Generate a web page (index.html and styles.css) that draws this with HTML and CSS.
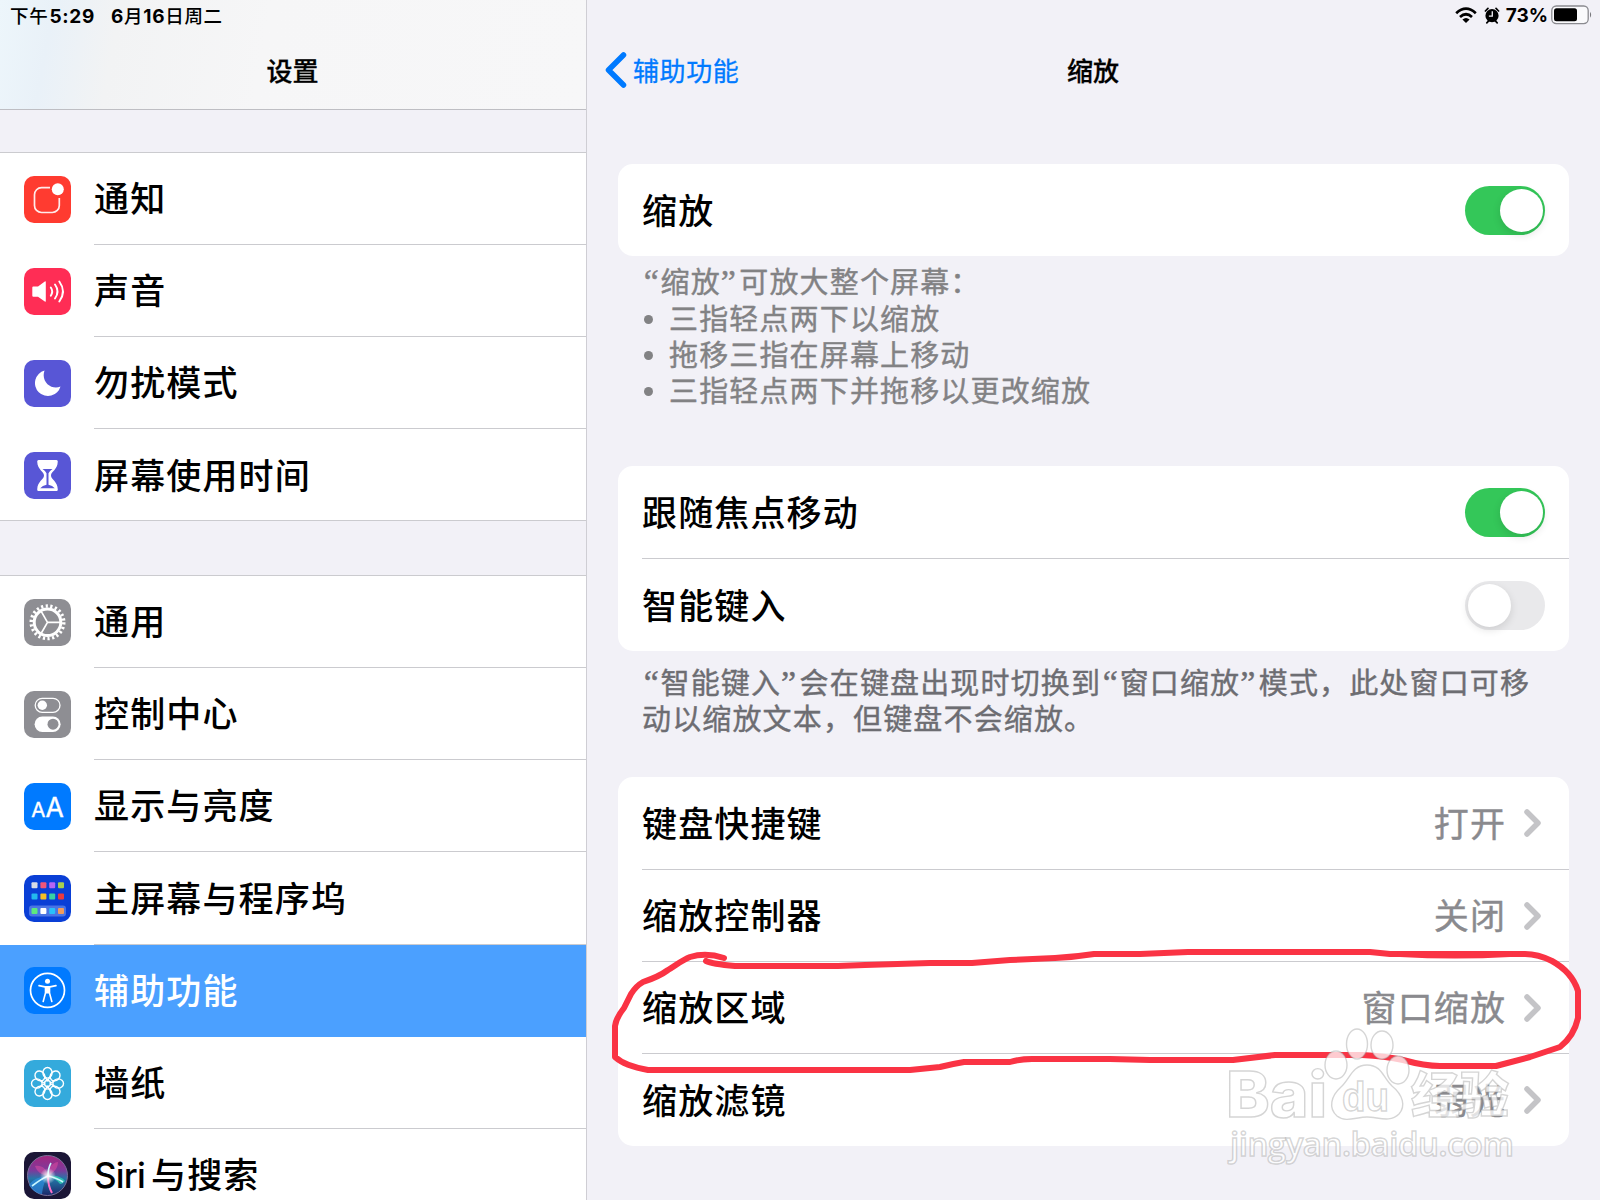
FILE: index.html
```html
<!DOCTYPE html>
<html lang="zh-CN">
<head>
  <meta charset="UTF-8" />
  <meta name="viewport" content="width=device-width, initial-scale=1.0" />
  <title>设置</title>
  <link rel="stylesheet" href="styles.css">
</head>
<body>
  <div class="screen">
    <aside class="sidebar">
      <header class="side-header">
        <div class="status"><span>下午<b class="num time">5:29</b></span><span class="date"><b class="num">6</b>月<b class="num">16</b>日周二</span></div>
        <h1 class="title">设置</h1>
      </header>

      <nav class="group">
        <a class="item">
          <svg class="icon" viewBox="0 0 47 47" style="background:#ff3b30">
            <path d="M26 11.7H17.5a7 7 0 0 0-7 7v10.8a7 7 0 0 0 7 7h10.8a7 7 0 0 0 7-7V22" fill="none" stroke="#fff" stroke-opacity=".9" stroke-width="1.7"/>
            <circle cx="33.8" cy="13.3" r="6" fill="#fff"/>
          </svg>
          <span class="label">通知</span>
        </a>
        <a class="item">
          <svg class="icon" viewBox="0 0 47 47" style="background:#ff2d55">
            <path d="M8.3 19.5q0-1 1-1H14l6.8-5q1-.6 1 .5v19q0 1.2-1 .5L14 28.8H9.3q-1 0-1-1z" fill="#fff"/>
            <path d="M26.8 19.5q2.8 4 0 8.3M31 16.5q5 7 0 14M35.3 13.5q7.4 10 0 20" fill="none" stroke="#fff" stroke-width="1.9" stroke-linecap="round"/>
          </svg>
          <span class="label">声音</span>
        </a>
        <a class="item">
          <svg class="icon" viewBox="0 0 47 47" style="background:#5856d6">
            <path d="M20.5 10.5A13 13 0 1 0 36.5 26.5C28 30.5 16.5 22 20.5 10.5z" fill="#fff"/>
          </svg>
          <span class="label">勿扰模式</span>
        </a>
        <a class="item">
          <svg class="icon" viewBox="0 0 47 47" style="background:#5856d6">
            <path d="M14.5 8h18q1.300 0 1.300 1.500C33.500 18 27 19.500 27 23.500S33.500 29 33.800 37.500q0 1.500-1.300 1.500h-18q-1.300 0-1.300-1.500C13.500 29 20 27.500 20 23.500S13.500 18 13.200 9.500Q13.200 8 14.500 8z" fill="#fff"/>
            <path d="M18.500 17h10q-3 2-4 4.200v11.500q4 .5 6.300 3.500H16.200q2.300-3 6.300-3.500V21.200q-1-2.200-4-4.200z" fill="#5856d6"/>
          </svg>
          <span class="label">屏幕使用时间</span>
        </a>
      </nav>

      <nav class="group">
        <a class="item">
          <svg class="icon" viewBox="0 0 47 47" style="background:#8e8e93">
            <g fill="none" stroke="#fff">
              <circle cx="23.5" cy="23.3" r="13.3" stroke-width="3"/>
              <circle cx="23.5" cy="23.3" r="16.3" stroke-width="3.4" stroke-dasharray="2.2 2.455"/>
              <path d="M23.5 23.3H37M23.5 23.3L16.8 11.6M23.5 23.3L16.8 35" stroke-width="1.7"/>
            </g>
          </svg>
          <span class="label">通用</span>
        </a>
        <a class="item">
          <svg class="icon" viewBox="0 0 47 47" style="background:#8e8e93">
            <rect x="11.2" y="7.3" width="24.8" height="14" rx="7" fill="none" stroke="#fff" stroke-width="1.3"/>
            <circle cx="18.3" cy="14.3" r="4.7" fill="#fff"/>
            <rect x="10.6" y="25.5" width="26" height="15.5" rx="7.7" fill="#fff"/>
            <circle cx="29" cy="33.2" r="5.5" fill="#8e8e93"/>
          </svg>
          <span class="label">控制中心</span>
        </a>
        <a class="item">
          <svg class="icon" viewBox="0 0 47 47" style="background:#007aff">
            <text class="aa" x="7.3" y="33.5" font-size="20.5">A</text>
            <text class="aa" x="21.5" y="33.5" font-size="26.5">A</text>
          </svg>
          <span class="label">显示与亮度</span>
        </a>
        <a class="item">
          <svg class="icon" viewBox="0 0 47 47" style="background:#0a3fd6">
            <rect x="5" y="30.5" width="37" height="11" rx="3" fill="#4a74e4"/>
            <g>
              <rect x="7.5" y="7.3" width="6" height="6" rx="1" fill="#d9dce6"/>
              <rect x="16.4" y="7.3" width="6" height="6" rx="1" fill="#f0567a"/>
              <rect x="25.2" y="7.3" width="6" height="6" rx="1" fill="#b465f5"/>
              <rect x="34" y="7.3" width="6" height="6" rx="1" fill="#a8cf4e"/>
              <rect x="7.5" y="18.5" width="6" height="6" rx="1" fill="#22b8ee"/>
              <rect x="16.4" y="18.5" width="6" height="6" rx="1" fill="#f7bf23"/>
              <rect x="25.2" y="18.5" width="6" height="6" rx="1" fill="#37d3a3"/>
              <rect x="34" y="18.5" width="6" height="6" rx="1" fill="#ec3a3e"/>
              <rect x="7.5" y="33" width="6" height="6" rx="1" fill="#5de87d"/>
              <rect x="16.4" y="33" width="6" height="6" rx="1" fill="#fff"/>
              <rect x="25.2" y="33" width="6" height="6" rx="1" fill="#28c0fb"/>
              <rect x="34" y="33" width="6" height="6" rx="1" fill="#f39c5b"/>
            </g>
          </svg>
          <span class="label">主屏幕与程序坞</span>
        </a>
        <a class="item active">
          <svg class="icon" viewBox="0 0 47 47" style="background:#007aff">
            <circle cx="23.5" cy="23.3" r="17" fill="none" stroke="#fff" stroke-width="1.7"/>
            <circle cx="23.5" cy="14.2" r="2.5" fill="#fff"/>
            <path d="M15 18.6l6 1.300h5l6-1.300M21.500 20v6l-2.300 8.500M25.500 20v6l2.300 8.500" fill="none" stroke="#fff" stroke-width="1.6" stroke-linecap="round" stroke-linejoin="round"/>
            <path d="M21 19.5h5v7h-5z" fill="#fff"/>
          </svg>
          <span class="label">辅助功能</span>
        </a>
        <a class="item">
          <svg class="icon" viewBox="0 0 47 47" style="background:#34aadc">
            <g fill="none" stroke="#fff" stroke-width="1.4">
              <ellipse cx="23.5" cy="12.8" rx="4.6" ry="5.3"/>
              <ellipse cx="23.5" cy="12.8" rx="4.6" ry="5.3" transform="rotate(45 23.5 23.5)"/>
              <ellipse cx="23.5" cy="12.8" rx="4.6" ry="5.3" transform="rotate(90 23.5 23.5)"/>
              <ellipse cx="23.5" cy="12.8" rx="4.6" ry="5.3" transform="rotate(135 23.5 23.5)"/>
              <ellipse cx="23.5" cy="12.8" rx="4.6" ry="5.3" transform="rotate(180 23.5 23.5)"/>
              <ellipse cx="23.5" cy="12.8" rx="4.6" ry="5.3" transform="rotate(225 23.5 23.5)"/>
              <ellipse cx="23.5" cy="12.8" rx="4.6" ry="5.3" transform="rotate(270 23.5 23.5)"/>
              <ellipse cx="23.5" cy="12.8" rx="4.6" ry="5.3" transform="rotate(315 23.5 23.5)"/>
              <circle cx="23.5" cy="23.5" r="3"/>
              <path d="M20.5 16.5L23.5 20.5L26.5 16.5M30.5 20.5L26.5 23.5L30.5 26.5M26.5 30.5L23.5 26.5L20.5 30.5M16.5 26.5L20.5 23.5L16.5 20.5"/>
            </g>
          </svg>
          <span class="label">墙纸</span>
        </a>
        <a class="item">
          <svg class="icon" viewBox="0 0 47 47" style="background:#1b1636">
            <defs>
              <linearGradient id="orb" x1="0" y1="0" x2="0" y2="1">
                <stop offset="0" stop-color="#a5257f"/>
                <stop offset=".38" stop-color="#7b3b9c"/>
                <stop offset=".58" stop-color="#2477a8"/>
                <stop offset="1" stop-color="#1b2768"/>
              </linearGradient>
              <radialGradient id="glow">
                <stop offset="0" stop-color="#fff"/>
                <stop offset=".4" stop-color="#fff" stop-opacity=".6"/>
                <stop offset="1" stop-color="#fff" stop-opacity="0"/>
              </radialGradient>
            </defs>
            <circle cx="23.5" cy="23.5" r="20" fill="url(#orb)" stroke="#7a7199" stroke-width="1"/>
            <path d="M23 24C14 25 8 28 5 33C8 39 14 42 18 42C19 34 21 29 23 24z" fill="#2e8fe0" opacity=".7"/>
            <path d="M24 24C32 23 38 25 41 29C39 31 38 32 36 32C33 28 29 26 24 24z" fill="#32d0b4" opacity=".8"/>
            <path d="M24 24C23 17 18 13 11 14C13 20 18 23 24 24zM24 24C24 17 27 11 34 10C34 17 29 21 24 24z" fill="#ef4fa4" opacity=".45"/>
            <path d="M24 24Q24 34 28 41" fill="none" stroke="#ff70c8" stroke-width="2"/>
            <path d="M8 34Q17 27 24 24Q33 26 39 30M24 24Q24 16 27 11" fill="none" stroke="#c9f6ff" stroke-width="1.6"/>
            <circle cx="24" cy="24" r="8" fill="url(#glow)"/>
          </svg>
          <span class="label"><span class="latin">Siri</span>与搜索</span>
        </a>
      </nav>
    </aside>

    <main class="detail">
      <div class="status status-right">
        <svg class="wifi" width="22" height="17" viewBox="0 0 22 17">
          <g fill="none" stroke="#000" stroke-width="2.7">
            <path d="M1.2 6.2Q11-3 20.8 6.2"/>
            <path d="M5 10Q11 4.5 17 10"/>
          </g>
          <path d="M7.4 12.5Q11 9.5 14.6 12.5L11 16z"/>
        </svg>
        <svg class="alarm" width="16" height="17" viewBox="0 0 17 18">
          <circle cx="8.5" cy="9.2" r="7"/>
          <path d="M1.5 4.2L4.2 1.5M15.5 4.2L12.8 1.5M3 16.8l2-2M14 16.8l-2-2" stroke="#000" stroke-width="1.8" stroke-linecap="round"/>
          <path d="M8.8 4.5v5.2H5.2" fill="none" stroke="#f2f1f7" stroke-width="1.4"/>
        </svg>
        <b class="num">73%</b>
        <svg class="battery" width="42" height="20" viewBox="0 0 42 20">
          <rect x=".8" y="1" width="36.4" height="17.6" rx="4.5" fill="#fafafc" stroke="#8b8b90" stroke-width="1.3"/>
          <rect x="3" y="3.3" width="23" height="13" rx="2.5"/>
          <path d="M39 6.8q2.3 3 0 6z" fill="#77777b"/>
        </svg>
      </div>
      <header class="detail-header">
        <a class="back">
          <svg width="22" height="36" viewBox="0 0 22 36"><path d="M18.5 3L3.5 18L18.5 33" fill="none" stroke="#007aff" stroke-width="5.5" stroke-linecap="round" stroke-linejoin="round"/></svg>
          <span>辅助功能</span>
        </a>
        <h2 class="title">缩放</h2>
      </header>

      <section class="card">
        <div class="row"><span class="label">缩放</span><span class="switch on"></span></div>
      </section>
      <div class="note note-list">
        <p><span class="q">“</span>缩放<span class="q end">”</span>可放大整个屏幕：</p>
        <ul>
          <li>三指轻点两下以缩放</li>
          <li>拖移三指在屏幕上移动</li>
          <li>三指轻点两下并拖移以更改缩放</li>
        </ul>
      </div>

      <section class="card">
        <div class="row"><span class="label">跟随焦点移动</span><span class="switch on"></span></div>
        <div class="row"><span class="label">智能键入</span><span class="switch"></span></div>
      </section>
      <p class="note note-typing"><span class="q">“</span>智能键入<span class="q end">”</span>会在键盘出现时切换到<span class="q">“</span>窗口缩放<span class="q end">”</span>模式，此处窗口可移<br>动以缩放文本，但键盘不会缩放。</p>

      <section class="card">
        <div class="row">
          <span class="label">键盘快捷键</span><span class="value">打开</span>
          <svg class="chevron" viewBox="0 0 18 28"><path d="M3 3L14 14L3 25"/></svg>
        </div>
        <div class="row">
          <span class="label">缩放控制器</span><span class="value">关闭</span>
          <svg class="chevron" viewBox="0 0 18 28"><path d="M3 3L14 14L3 25"/></svg>
        </div>
        <div class="row">
          <span class="label">缩放区域</span><span class="value">窗口缩放</span>
          <svg class="chevron" viewBox="0 0 18 28"><path d="M3 3L14 14L3 25"/></svg>
        </div>
        <div class="row">
          <span class="label">缩放滤镜</span><span class="value">弱光</span>
          <svg class="chevron" viewBox="0 0 18 28"><path d="M3 3L14 14L3 25"/></svg>
        </div>
      </section>
    </main>

    <!-- hand-drawn marker and watermark -->
    <svg class="overlay" viewBox="0 0 1600 1200">
      <path class="marker" d="M724 958Q706 952 690 957C682 960 675 966 668 970C660 976 652 979 643 982Q636 986 631 994L624 1008Q616 1018 615 1026V1057Q625 1066 648 1070H910L940 1067Q952 1064 964 1062H1010Q1020 1059 1032 1059H1110L1150 1060H1233L1275 1055H1362Q1385 1056 1403 1060Q1425 1066 1440 1066H1496L1530 1057L1560 1047Q1574 1036 1578 1018V991Q1572 972 1552 961Q1538 954 1525 954H1390L1370 952H1188L1140 954H1094Q1075 957 1055 958L1010 960L972 963H930L865 965L838 966H735Q712 964 706 961"/>
      <path class="marker" d="M1400 954Q1455 957 1510 954"/>
      <g class="watermark">
        <text class="bai" x="1226" y="1117" font-size="63" textLength="101" lengthAdjust="spacingAndGlyphs">Bai</text>
        <ellipse cx="1336" cy="1065" rx="11" ry="14"/>
        <ellipse cx="1357" cy="1044" rx="10.5" ry="15"/>
        <ellipse cx="1382" cy="1045" rx="11" ry="14"/>
        <ellipse cx="1398" cy="1070" rx="11" ry="14"/>
        <path d="M1367 1065C1382 1065 1383 1078 1392 1086C1403 1095 1406 1106 1399 1114C1390 1123 1378 1117 1367 1117S1346 1123 1337 1116C1328 1108 1331 1096 1341 1087C1350 1079 1352 1065 1367 1065z"/>
        <text x="1342" y="1111" font-size="40" font-weight="bold" textLength="47" lengthAdjust="spacingAndGlyphs">du</text>
        <text class="cjk" x="1411" y="1113" font-size="49" textLength="98">经验</text>
        <text class="url" x="1230" y="1156" font-size="33" textLength="284">jingyan.baidu.com</text>
      </g>
    </svg>
  </div>
</body>
</html>
```

FILE: styles.css
```css
:root {
  --bg: #f2f1f7;
  --line: #cbcbcf;
  --blue: #007aff;
}

* {
  box-sizing: border-box;
}

body {
  margin: 0;
  background: var(--bg);
  color: #000;
  font-family: "Noto Sans CJK SC", sans-serif;
}

.screen {
  position: relative;
  display: flex;
  width: 1600px;
  height: 1200px;
  overflow: hidden;
}

h1, h2, p, ul {
  margin: 0;
  padding: 0;
}

/* status bar */
.status {
  display: flex;
  align-items: center;
  height: 29px;
  padding-left: 10px;
  font-size: 18.5px;
  font-weight: 500;
  letter-spacing: 0.7px;
}

.num {
  font-family: Inter, sans-serif;
  font-size: 19px;
  font-weight: 650;
}

.time {
  margin-left: 1px;
}

.date {
  margin-left: 16px;
}

.status-right {
  height: 30px;
  justify-content: flex-end;
  padding: 0 7px 0 0;
  letter-spacing: 0;
}

.alarm {
  margin: 0 6px 0 7px;
}

.battery {
  margin-left: 3px;
}

.title {
  font-size: 26px;
  font-weight: 500;
  line-height: 40px;
  -webkit-text-stroke: 0.3px;
}

/* sidebar */
.sidebar {
  width: 587px;
  flex: none;
  border-right: 1px solid #cfced4;
}

.side-header {
  height: 110px;
  border-bottom: 1px solid #bebec3;
  background: linear-gradient(100deg, #edf6fb 0, #e9f1f8 9%, #f2f3f4 20%, #f6f6f7 45%, #f7f7f8 100%);
}

.side-header .title {
  margin-top: 21px;
  padding-right: 1px;
  text-align: center;
}

.group {
  margin-top: 42px;
  border-top: 1px solid var(--line);
  border-bottom: 1px solid var(--line);
  background: #fff;
}

.group + .group {
  margin-top: 54px;
}

.item {
  display: flex;
  align-items: center;
  height: 92px;
  padding-left: 23.5px;
}

.group + .group .item {
  height: 92.2px;
}

.icon {
  width: 47px;
  height: 47px;
  flex: none;
  margin-right: 23.5px;
  border-radius: 10px;
}

.aa {
  fill: #fff;
  stroke: #fff;
  stroke-width: 0.4px;
  font-family: Inter, sans-serif;
}

.label {
  flex: 1;
  padding-bottom: 4px;
  font-size: 35px;
  font-weight: 500;
  letter-spacing: 1.15px;
  line-height: 87px;
}

.item .label {
  padding-bottom: 2.5px;
  border-bottom: 1px solid var(--line);
  line-height: 88.5px;
}

.item:last-child .label {
  border-bottom: none;
}

/* the bottom rule takes the last pixel of the row */
.group .item:last-child {
  margin-bottom: -1px;
}

.latin {
  margin-right: 6px;
  font-family: Inter, sans-serif;
  letter-spacing: -0.8px;
}

.active {
  background: #4ba0ff;
  color: #fff;
}

.item.active .label {
  border-color: transparent;
}

/* detail pane */
.detail {
  flex: 1;
}

.detail-header {
  display: grid;
  grid-template-columns: 1fr auto 1fr;
  align-items: center;
  height: 80px;
  padding-left: 18px;
  padding-right: 19px;
}

.detail-header .title {
  padding-bottom: 1px;
}

.back {
  display: flex;
  align-items: center;
  gap: 6px;
  color: var(--blue);
  font-size: 26px;
  letter-spacing: 0.6px;
  -webkit-text-stroke: 0.3px;
}

.back span {
  padding-bottom: 2px;
}

.card {
  margin: 0 31px;
  border-radius: 15px;
  background: #fff;
}

.detail-header + .card {
  margin-top: 54px;
}

.row {
  display: flex;
  align-items: center;
  height: 92px;
  margin-left: 24px;
  padding-right: 24px;
}

.row + .row {
  border-top: 1px solid var(--line);
}

.row + .row:last-child {
  height: 93px;
}

.value {
  padding-bottom: 4px;
  color: #8a8a8e;
  font-size: 35px;
  letter-spacing: 1.1px;
  -webkit-text-stroke: 0.4px;
}

.chevron {
  width: 18px;
  height: 28px;
  margin: 0 3px 0 18px;
}

.chevron path {
  fill: none;
  stroke: #c4c4c7;
  stroke-width: 5.5;
  stroke-linecap: round;
  stroke-linejoin: round;
}

.switch {
  display: flex;
  width: 80px;
  height: 49px;
  padding: 3px 2.5px;
  border-radius: 25px;
  background: #e9e9eb;
}

.switch::before {
  content: "";
  width: 43px;
  height: 43px;
  border-radius: 50%;
  background: #fff;
  box-shadow: 0 3px 8px rgba(0, 0, 0, 0.12);
}

.switch.on {
  justify-content: flex-end;
  background: #34c759;
}

.note {
  padding-left: 55px;
  color: #6d6d72;
  font-size: 29px;
  letter-spacing: 1.15px;
  white-space: nowrap;
  -webkit-text-stroke: 0.4px;
}

.note-list {
  height: 210px;
  padding-top: 6px;
  color: #828284;
  line-height: 36px;
}

.note-list ul {
  list-style: none;
}

.note-list li {
  display: flex;
  align-items: center;
}

.note-list li::before {
  content: "";
  width: 9px;
  height: 9px;
  margin: 5px 16px 0 2px;
  border-radius: 50%;
  background: #828284;
}

.note-typing {
  height: 126px;
  padding-top: 13px;
  line-height: 35px;
}

.q {
  display: inline-block;
  width: 18.5px;
  font-family: "Liberation Serif", serif;
  font-size: 34px;
  line-height: 1;
  letter-spacing: 0;
  text-align: center;
}

.q.end {
  text-align: left;
}

/* overlay */
.overlay {
  position: absolute;
  left: 0;
  top: 0;
  width: 1600px;
  height: 1200px;
  pointer-events: none;
}

.marker {
  fill: none;
  stroke: #fa3344;
  stroke-width: 6;
  stroke-linecap: round;
  stroke-linejoin: round;
}

.watermark {
  fill: rgba(255, 255, 255, 0.75);
  stroke: rgba(150, 150, 150, 0.4);
  stroke-width: 1.4;
  font-family: "Liberation Sans", sans-serif;
}

.watermark .bai {
  font-family: Inter, sans-serif;
  font-weight: 800;
}

.watermark .cjk {
  font-family: "Noto Sans CJK SC", sans-serif;
  font-weight: 900;
}

.watermark .url {
  font-family: "Open Sans", sans-serif;
  font-weight: 600;
}
```
